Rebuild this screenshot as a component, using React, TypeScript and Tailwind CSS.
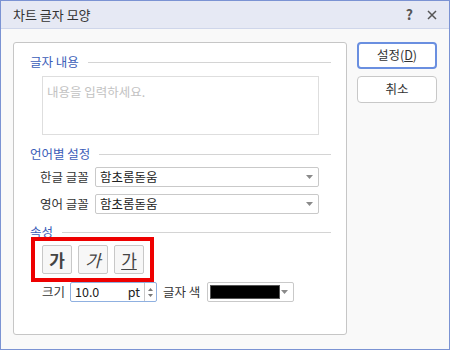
import React from "react";

const font = { fontFamily: '"Noto Sans CJK KR", "Noto Sans", sans-serif' };

const Heading = ({ label }: { label: string }) => (
  <div className="flex items-center h-4 pr-[15px]">
    <span className="text-[12.5px] leading-4 text-[#3b5db8] pl-[16px] pr-[9px]">{label}</span>
    <div className="flex-1 h-px bg-[#d4d4d4]" />
  </div>
);

const Arrow = () => (
  <svg width="7" height="4" viewBox="0 0 7 4" className="shrink-0">
    <path d="M0 0h7L3.5 4z" fill="#8a8a8a" />
  </svg>
);

const FontSelect = ({ label, value }: { label: string; value: string }) => (
  <div className="flex items-center h-[20px] pl-[26px]">
    <span className="w-[55px] text-[12.5px] text-[#333]">{label}</span>
    <div className="w-[224px] h-[20px] border border-[#c9c9c9] rounded-[2px] bg-white flex items-center pl-[4px] pr-[5px]">
      <span className="flex-1 text-[12.5px] text-[#222] leading-4">{value}</span>
      <Arrow />
    </div>
  </div>
);

const StyleButton = ({ kind }: { kind: "b" | "i" | "u" }) => (
  <div className="w-[30px] h-[29px] border border-[#c8c8c8] rounded-[2px] bg-[#f7f7f7] flex items-center justify-center">
    <span
      className={
        "text-[17px] leading-5 text-[#444] " +
        (kind === "b" ? "font-bold" : kind === "i" ? "italic" : "underline underline-offset-2")
      }
    >
      가
    </span>
  </div>
);

export default function App() {
  return (
    <div style={font} className="w-[450px] h-[350px] border border-[#7b93d3] bg-[#f9f9f9] flex flex-col select-none">
      {/* title bar */}
      <div className="h-[28px] bg-[#e6e9f4] border-b border-[#cfd6ea] flex items-center pl-[12px] pr-[12px]">
        <span className="flex-1 text-[13px] text-[#333]">차트 글자 모양</span>
        <span className="text-[14px] font-semibold text-[#555] mr-[14px]">?</span>
        <svg width="10" height="10" viewBox="0 0 10 10">
          <path d="M1 1l8 8M9 1l-8 8" stroke="#555" strokeWidth="1.5" />
        </svg>
      </div>

      <div className="flex-1 flex pl-[12px] pt-[13px] pr-[11px] pb-[12px] gap-[10px]">
        {/* main panel */}
        <div className="w-[334px] h-[293px] border border-[#c6c6c6] rounded-[3px] bg-white flex flex-col pt-[11px]">
          <Heading label="글자 내용" />
          <div className="ml-[28px] mt-[6px] w-[277px] h-[59px] border border-[#dedede] px-[4px] pt-[1px]">
            <span className="text-[12.5px] text-[#c2c2c2]">내용을 입력하세요.</span>
          </div>

          <div className="mt-[11px]">
            <Heading label="언어별 설정" />
          </div>
          <div className="mt-[5px] flex flex-col gap-[7px]">
            <FontSelect label="한글 글꼴" value="함초롬돋움" />
            <FontSelect label="영어 글꼴" value="함초롬돋움" />
          </div>

          <div className="mt-[10px]">
            <Heading label="속성" />
          </div>

          <div className="relative ml-[28px] mt-[5px] flex gap-[6px]">
            <StyleButton kind="b" />
            <StyleButton kind="i" />
            <StyleButton kind="u" />
            <div className="absolute left-[-11px] top-[-8px] w-[123px] h-[45px] border-[4px] border-[#ee0000]" />
          </div>

          <div className="mt-[8px] ml-[28px] flex items-center h-[20px]">
            <span className="w-[28px] text-[12.5px] text-[#333]">크기</span>
            <div className="w-[87px] h-[20px] border border-[#8fb0e0] rounded-[2px] bg-white flex items-center">
              <span className="pl-[4px] text-[12.5px] text-[#222] flex-1">10.0</span>
              <span className="text-[12.5px] text-[#222] pr-[4px]">pt</span>
              <div className="w-[12px] h-full border-l border-[#c8c8c8] flex flex-col items-center justify-center gap-[3px]">
                <svg width="5" height="3" viewBox="0 0 5 3">
                  <path d="M0 3L2.5 0 5 3z" fill="#777" />
                </svg>
                <svg width="5" height="3" viewBox="0 0 5 3">
                  <path d="M0 0h5L2.5 3z" fill="#777" />
                </svg>
              </div>
            </div>
            <span className="ml-[6px] w-[44px] text-[12.5px] text-[#333]">글자 색</span>
            <div className="w-[87px] h-[20px] border border-[#c9c9c9] rounded-[2px] bg-white flex items-center pl-[2px] pr-[5px]">
              <div className="w-[70px] h-[14px] bg-black border border-[#555]" />
              <div className="flex-1 flex justify-end">
                <Arrow />
              </div>
            </div>
          </div>
        </div>

        {/* buttons */}
        <div className="flex flex-col gap-[7px]">
          <div className="w-[80px] h-[27px] border-2 border-[#6a8fe0] rounded-[4px] bg-white flex items-center justify-center text-[12.5px] text-[#333]">
            설정(<span className="underline">D</span>)
          </div>
          <div className="w-[80px] h-[27px] border border-[#c8c8c8] rounded-[4px] bg-white flex items-center justify-center text-[12.5px] text-[#333]">
            취소
          </div>
        </div>
      </div>
    </div>
  );
}
